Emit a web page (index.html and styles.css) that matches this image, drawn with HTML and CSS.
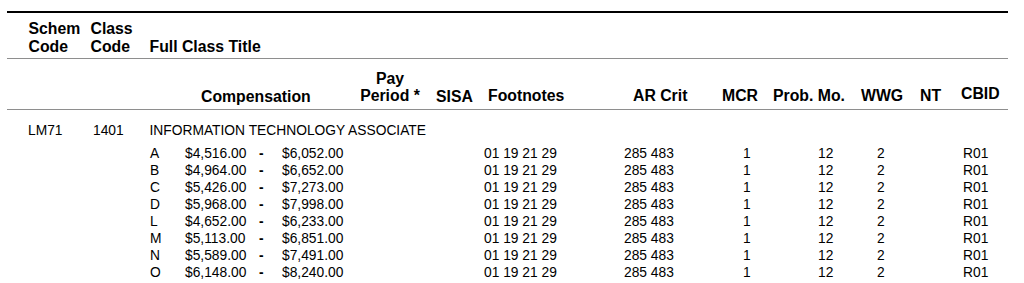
FILE: index.html
```html
<!DOCTYPE html>
<html lang="en">
<head>
<meta charset="utf-8">
<title>Class Compensation</title>
<link rel="stylesheet" href="styles.css">
</head>
<body>
<div class="sheet">
  <div class="head1">
    <div class="spacer"></div>
    <div class="hcell">Schem<br>Code</div>
    <div class="hcell">Class<br>Code</div>
    <div class="hcell">Full Class Title</div>
  </div>
  <div class="head2">
    <div class="spacer"></div>
    <div class="hcell low">Compensation</div>
    <div class="hcell center">Pay<br>Period *</div>
    <div class="hcell low sisa">SISA</div>
    <div class="hcell">Footnotes</div>
    <div class="hcell">AR Crit</div>
    <div class="hcell">MCR</div>
    <div class="hcell">Prob. Mo.</div>
    <div class="hcell">WWG</div>
    <div class="hcell">NT</div>
    <div class="hcell high">CBID</div>
  </div>
  <div class="cls">
    <div class="cls-title">
      <div class="spacer"></div>
      <div>LM71</div>
      <div>1401</div>
      <div>INFORMATION TECHNOLOGY ASSOCIATE</div>
    </div>
    <div class="steps">
      <div class="step"><div></div><div>A</div><div>$4,516.00</div><div class="dash">-</div><div>$6,052.00</div><div>01 19 21 29</div><div>285 483</div><div>1</div><div>12</div><div>2</div><div>R01</div></div>
      <div class="step"><div></div><div>B</div><div>$4,964.00</div><div class="dash">-</div><div>$6,652.00</div><div>01 19 21 29</div><div>285 483</div><div>1</div><div>12</div><div>2</div><div>R01</div></div>
      <div class="step"><div></div><div>C</div><div>$5,426.00</div><div class="dash">-</div><div>$7,273.00</div><div>01 19 21 29</div><div>285 483</div><div>1</div><div>12</div><div>2</div><div>R01</div></div>
      <div class="step"><div></div><div>D</div><div>$5,968.00</div><div class="dash">-</div><div>$7,998.00</div><div>01 19 21 29</div><div>285 483</div><div>1</div><div>12</div><div>2</div><div>R01</div></div>
      <div class="step"><div></div><div>L</div><div>$4,652.00</div><div class="dash">-</div><div>$6,233.00</div><div>01 19 21 29</div><div>285 483</div><div>1</div><div>12</div><div>2</div><div>R01</div></div>
      <div class="step"><div></div><div>M</div><div>$5,113.00</div><div class="dash">-</div><div>$6,851.00</div><div>01 19 21 29</div><div>285 483</div><div>1</div><div>12</div><div>2</div><div>R01</div></div>
      <div class="step"><div></div><div>N</div><div>$5,589.00</div><div class="dash">-</div><div>$7,491.00</div><div>01 19 21 29</div><div>285 483</div><div>1</div><div>12</div><div>2</div><div>R01</div></div>
      <div class="step"><div></div><div>O</div><div>$6,148.00</div><div class="dash">-</div><div>$8,240.00</div><div>01 19 21 29</div><div>285 483</div><div>1</div><div>12</div><div>2</div><div>R01</div></div>
    </div>
  </div>
</div>
</body>
</html>
```
FILE: styles.css
```css
html, body {
  margin: 0;
  padding: 0;
  background: #ffffff;
}

body {
  font-family: "Liberation Sans", Arial, sans-serif;
  color: #000000;
  overflow: hidden;
}

.sheet {
  margin: 11px 0 0 7px;
  width: 1001px;
}

.hcell {
  font-weight: bold;
  font-size: 15.8px;
  white-space: nowrap;
}

.head1 {
  border-top: 2px solid #000000;
  border-bottom: 1px solid #8e8e8e;
  padding: 7px 0 2px 0;
  display: grid;
  grid-template-columns: 21.5px 62px 59px 1fr;
  align-items: end;
  line-height: 18px;
}

.head2 {
  border-bottom: 1px solid #8e8e8e;
  padding: 11px 0 4px 0;
  display: grid;
  grid-template-columns: 194px 155px 68px 64px 145px 89px 51px 88px 59px 41px 47px;
  align-items: end;
  line-height: 17px;
}

.head2 .hcell {
  padding-bottom: 1px;
}

.head2 .hcell.low {
  padding-bottom: 0;
}

.head2 .hcell.high {
  padding-bottom: 3px;
}

.head2 .center {
  text-align: center;
}

.head2 .sisa {
  padding-left: 12px;
}

.cls {
  font-size: 13.8px;
  line-height: 17px;
  white-space: nowrap;
}

.cls-title {
  display: grid;
  grid-template-columns: 21px 65px 56.5px 1fr;
  padding-top: 12px;
}

.steps {
  margin-top: 6px;
  display: flex;
  flex-direction: column;
}

.step {
  display: grid;
  grid-template-columns: 143px 35px 74px 23px 202px 140px 119px 75px 59px 86px 45px;
}

.step .dash {
  font-weight: bold;
}
```
